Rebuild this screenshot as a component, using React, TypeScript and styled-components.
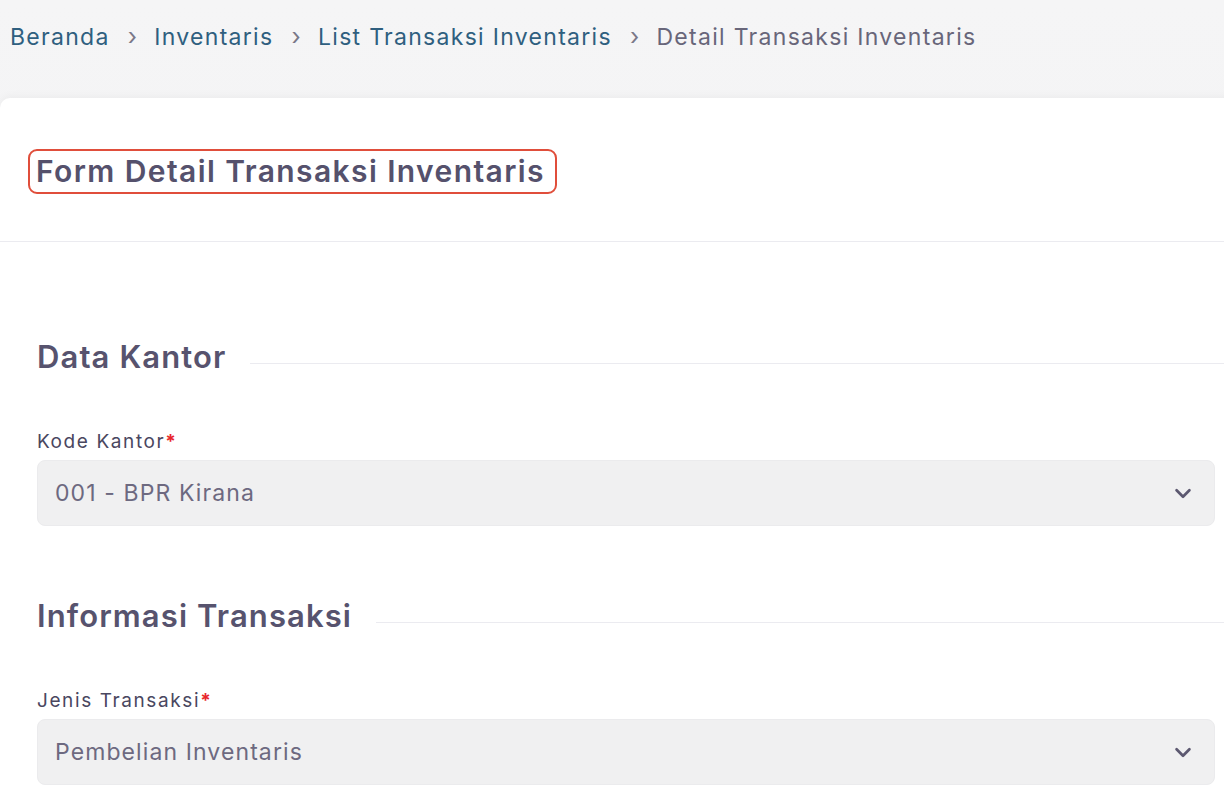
import React from "react";
import styled, { createGlobalStyle } from "styled-components";

const GlobalStyle = createGlobalStyle`
  html, body {
    margin: 0;
    padding: 0;
    background: #f3f3f4;
    font-family: "Inter", "Noto Sans", sans-serif;
    overflow: hidden;
  }
`;

const crumbs = ["Beranda", "Inventaris", "List Transaksi Inventaris"];

const ChevronDown = () => (
  <svg width="22" height="22" viewBox="0 0 24 24" fill="none">
    <path
      d="M5 9l7 7 7-7"
      stroke="#5c5870"
      strokeWidth="3"
      strokeLinecap="round"
      strokeLinejoin="round"
    />
  </svg>
);

interface SelectFieldType {
  label: string;
  value: string;
}

const SelectField = ({ label, value }: SelectFieldType) => {
  return (
    <Field>
      <Label>
        {label}
        <Required>*</Required>
      </Label>
      <SelectBox>
        <SelectValue>{value}</SelectValue>
        <ChevronDown />
      </SelectBox>
    </Field>
  );
};

const Section = ({ title, children }: { title: string; children: React.ReactNode }) => {
  return (
    <SectionWrap>
      <SectionHead>
        <SectionTitle>{title}</SectionTitle>
        <SectionLine />
      </SectionHead>
      {children}
    </SectionWrap>
  );
};

const App = () => {
  return (
    <Page>
      <GlobalStyle />
      <Breadcrumb>
        {crumbs.map((c) => (
          <React.Fragment key={c}>
            <CrumbLink>{c}</CrumbLink>
            <Separator>›</Separator>
          </React.Fragment>
        ))}
        <CrumbCurrent>Detail Transaksi Inventaris</CrumbCurrent>
      </Breadcrumb>
      <Card>
        <CardHeader>
          <FormTitle>Form Detail Transaksi Inventaris</FormTitle>
        </CardHeader>
        <CardBody>
          <Section title="Data Kantor">
            <SelectField label="Kode Kantor" value="001 - BPR Kirana" />
          </Section>
          <Section title="Informasi Transaksi">
            <SelectField label="Jenis Transaksi" value="Pembelian Inventaris" />
          </Section>
        </CardBody>
      </Card>
    </Page>
  );
};

const Page = styled.div`
  width: 1224px;
  height: 789px;
  background: linear-gradient(180deg, #f5f5f6 0%, #f1f1f2 100%);
  display: flex;
  flex-direction: column;
`;

const Breadcrumb = styled.nav`
  display: flex;
  align-items: center;
  height: 74px;
  padding-left: 10px;
  font-size: 23px;
  letter-spacing: 1.3px;
`;

const CrumbLink = styled.span`
  color: #2f5f7f;
`;

const CrumbCurrent = styled.span`
  color: #68667a;
`;

const Separator = styled.span`
  color: #7a7888;
  font-size: 24px;
  margin: -2px 16px 0 18px;
`;

const Card = styled.div`
  margin-top: 24px;
  margin-right: -20px;
  flex: 1;
  background: #ffffff;
  border-radius: 10px 0 0 0;
  box-shadow: 0 -2px 8px rgba(0, 0, 0, 0.04);
`;

const CardHeader = styled.div`
  height: 144px;
  border-bottom: 1px solid #ebebf0;
  display: flex;
  align-items: center;
  padding-left: 28px;
  box-sizing: border-box;
`;

const FormTitle = styled.h1`
  margin: 3px 0 0 0;
  font-size: 30px;
  font-weight: 600;
  line-height: 36px;
  color: #55516c;
  border: 2.5px solid #e04e3b;
  border-radius: 9px;
  padding: 2px 10px 3px 6px;
  letter-spacing: 1.4px;
`;

const CardBody = styled.div`
  padding: 97px 0 0 37px;
  display: flex;
  flex-direction: column;
  gap: 72px;
`;

const SectionWrap = styled.section`
  display: flex;
  flex-direction: column;
`;

const SectionHead = styled.div`
  display: flex;
  align-items: center;
  gap: 24px;
  margin-bottom: 56px;
`;

const SectionTitle = styled.h2`
  margin: 0;
  font-size: 31px;
  font-weight: 600;
  color: #57536e;
  line-height: 36px;
  letter-spacing: 1.1px;
`;

const SectionLine = styled.div`
  flex: 1;
  height: 1px;
  background: #ebebf0;
  margin-top: 12px;
`;

const Field = styled.div`
  display: flex;
  flex-direction: column;
  gap: 7px;
  margin-right: 29px;
`;

const Label = styled.label`
  font-size: 19px;
  color: #4a475f;
  line-height: 22px;
  letter-spacing: 1.6px;
`;

const Required = styled.span`
  color: #e8262b;
  font-weight: 700;
  letter-spacing: 0;
`;

const SelectBox = styled.div`
  height: 66px;
  box-sizing: border-box;
  background: #f0f0f1;
  border: 1px solid #ebebed;
  border-radius: 8px;
  display: flex;
  align-items: center;
  justify-content: space-between;
  padding: 0 20px 0 17px;
`;

const SelectValue = styled.span`
  font-size: 23px;
  color: #6d6980;
  letter-spacing: 1.1px;
`;

export default App;
